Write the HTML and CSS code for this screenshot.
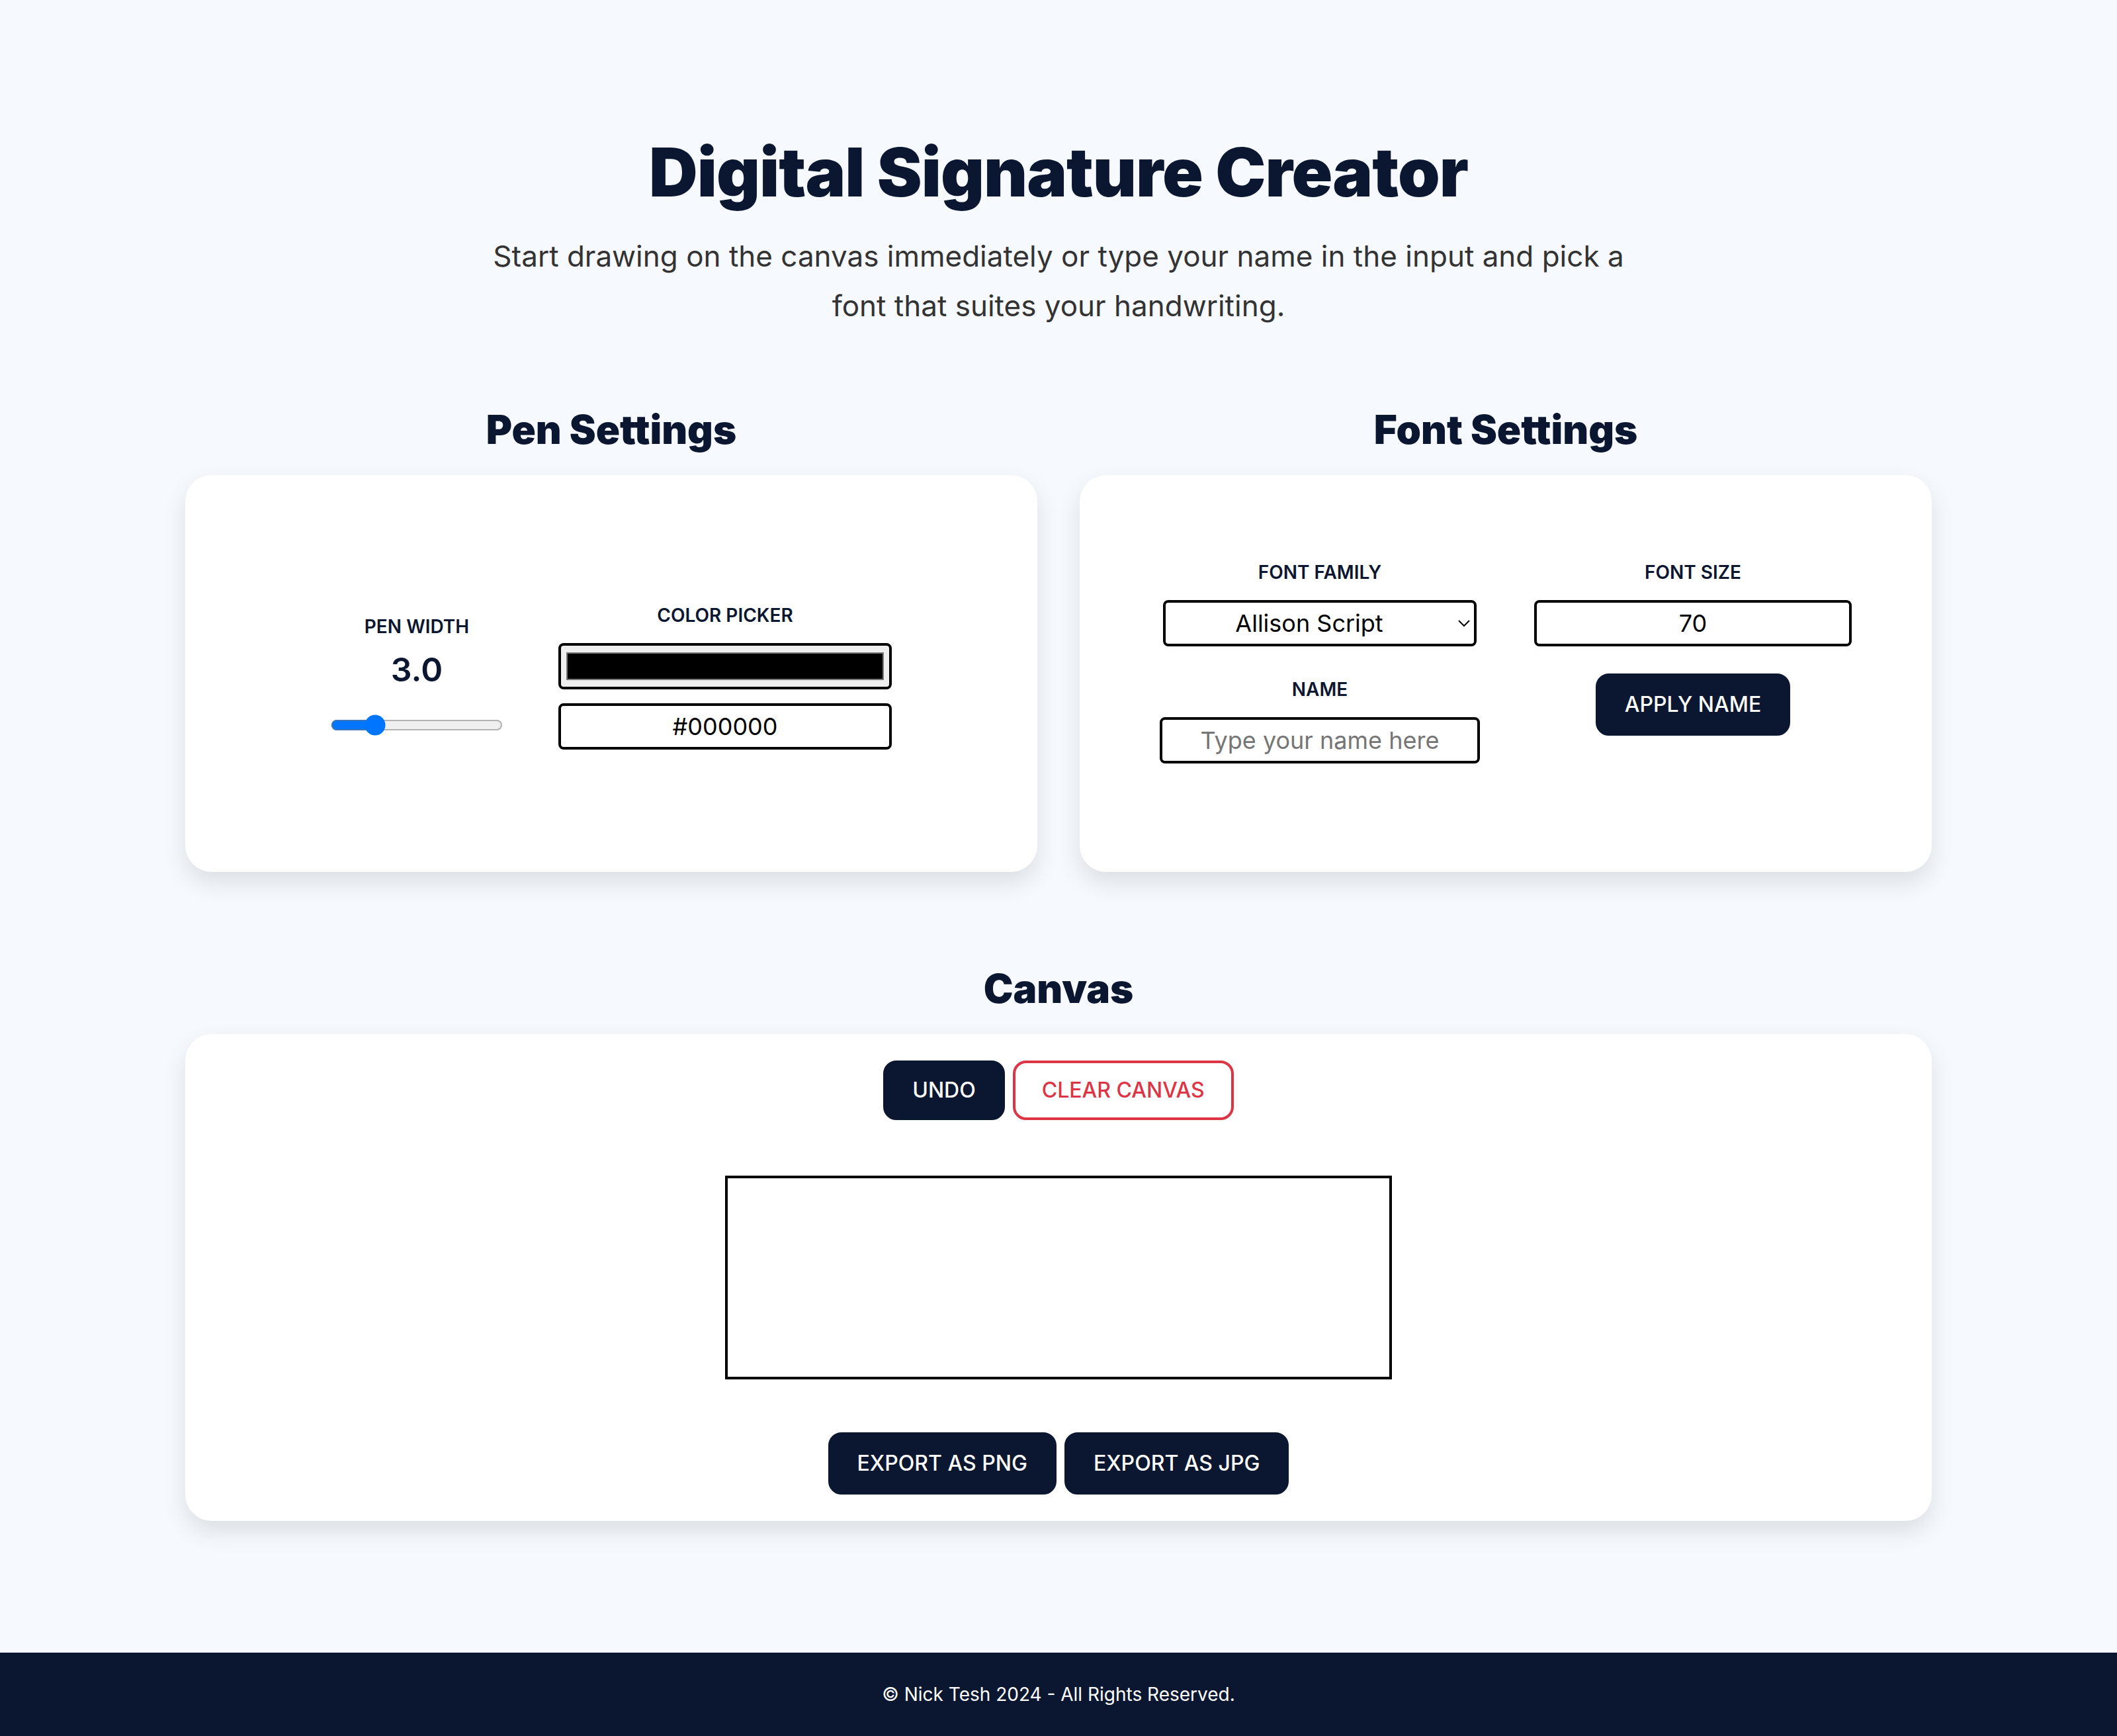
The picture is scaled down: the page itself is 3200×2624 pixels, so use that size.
FILE: index.html
```html
<!DOCTYPE html>
<html lang="en">
<head>
<meta charset="utf-8">
<title>Digital Signature Creator</title>
<link rel="stylesheet" href="styles.css">
</head>
<body>
<header class="hero">
  <h1 class="hero-title">Digital Signature Creator</h1>
  <p class="hero-text">Start drawing on the canvas immediately or type your name in the input and pick a font that suites your handwriting.</p>
</header>
<main class="main">
  <section class="settings">
    <div class="settings-col">
      <h2 class="section-title">Pen Settings</h2>
      <div class="card card-pen">
        <div class="pen-width">
          <label class="field-label" for="penWidth">Pen Width</label>
          <div class="pen-value">3.0</div>
          <input type="range" id="penWidth" class="pen-range" min="1" max="10" step="0.1" value="3">
        </div>
        <div class="color-group">
          <label class="field-label label-gap" for="penColor">Color Picker</label>
          <input type="color" id="penColor" class="color-input" value="#000000">
          <input type="text" class="text-input hex-input" value="#000000">
        </div>
      </div>
    </div>
    <div class="settings-col">
      <h2 class="section-title">Font Settings</h2>
      <div class="card card-font">
        <div class="font-grid">
          <div class="field">
            <label class="field-label label-gap" for="fontFamily">Font Family</label>
            <select id="fontFamily" class="select-input">
              <option>Allison Script</option>
              <option>Great Vibes</option>
              <option>Dancing Script</option>
            </select>
          </div>
          <div class="field">
            <label class="field-label label-gap" for="fontSize">Font Size</label>
            <input type="text" id="fontSize" class="text-input size-input" value="70">
          </div>
          <div class="field field-name">
            <label class="field-label label-gap" for="nameInput">Name</label>
            <input type="text" id="nameInput" class="text-input name-input" placeholder="Type your name here">
          </div>
          <div class="field">
            <button class="btn btn-dark btn-tall">Apply Name</button>
          </div>
        </div>
      </div>
    </div>
  </section>
  <section class="canvas-section">
    <h2 class="section-title">Canvas</h2>
    <div class="card canvas-card">
      <div class="btn-row">
        <button class="btn btn-dark">Undo</button>
        <button class="btn btn-danger">Clear Canvas</button>
      </div>
      <canvas class="sig-canvas" width="500" height="150"></canvas>
      <div class="btn-row">
        <button class="btn btn-dark btn-tall">Export as PNG</button>
        <button class="btn btn-dark btn-tall">Export as JPG</button>
      </div>
    </div>
  </section>
</main>
<footer class="footer">© Nick Tesh 2024 - All Rights Reserved.</footer>
</body>
</html>
```
FILE: styles.css
```css
html {
  zoom: 2;
}
* {
  box-sizing: border-box;
}
body {
  margin: 0;
  background: #f6f9fe;
  font-family: Inter, "Noto Sans", sans-serif;
  color: #0b1731;
}
.hero {
  text-align: center;
  padding-top: 100px;
}
.hero-title {
  margin: 0;
  font-size: 51px;
  line-height: 60px;
  font-weight: 900;
  letter-spacing: -0.5px;
}
.hero-text {
  margin: 15px auto 0;
  max-width: 880px;
  font-size: 22px;
  line-height: 37.5px;
  color: #333;
}
.main {
  max-width: 1320px;
  margin: 0 auto;
  padding: 56.5px 0 99.5px;
}
.settings {
  display: grid;
  grid-template-columns: 1fr 1fr;
  gap: 32px;
}
.section-title {
  margin: 0 0 16.5px;
  text-align: center;
  font-size: 30px;
  line-height: 36px;
  font-weight: 900;
}
.card {
  background: #fff;
  border-radius: 20px;
  box-shadow: 0 8px 18px rgba(0, 0, 0, 0.11);
}
.card-pen,
.card-font {
  height: 300px;
  display: flex;
  align-items: center;
  justify-content: center;
}
.card-pen {
  gap: 42px;
  padding-top: 5px;
}
.field-label {
  display: block;
  font-size: 14px;
  line-height: 17px;
  font-weight: 600;
  text-transform: uppercase;
  text-align: center;
}
.label-gap {
  margin-bottom: 12.5px;
}
.pen-width {
  display: flex;
  flex-direction: column;
  align-items: center;
  width: 130px;
}
.pen-value {
  margin-top: 9px;
  font-size: 25px;
  line-height: 30px;
  font-weight: 600;
}
.pen-range {
  width: 130px;
  margin: 19px 0 2px;
}
.color-group {
  display: flex;
  flex-direction: column;
  align-items: center;
}
.color-input {
  width: 252px;
  height: 35px;
  border: 2px solid #000;
  border-radius: 4px;
  margin: 0;
}
.text-input,
.select-input {
  height: 35px;
  border: 2px solid #000;
  border-radius: 4px;
  background: #fff;
  font-family: inherit;
  font-size: 18px;
  color: #000;
  text-align: center;
  margin: 0;
}
.hex-input {
  width: 252px;
  margin-top: 10.5px;
}
.font-grid {
  display: grid;
  grid-template-columns: 242px 240px;
  column-gap: 41px;
  row-gap: 20.5px;
  margin-bottom: 17px;
}
.field {
  display: flex;
  flex-direction: column;
  align-items: center;
}
.field-name {
  padding-top: 3.5px;
}
.select-input {
  width: 237px;
  text-align-last: center;
  padding: 0 6px 0 2px;
}
.size-input {
  width: 240px;
}
.name-input {
  width: 242px;
}
.name-input::placeholder {
  color: #757575;
}
.canvas-section {
  margin-top: 70px;
}
.canvas-card {
  padding: 20px;
  display: flex;
  flex-direction: column;
  align-items: center;
}
.btn-row {
  display: flex;
  justify-content: center;
  gap: 6px;
}
.btn {
  font-family: inherit;
  font-size: 16px;
  line-height: 19px;
  font-weight: 500;
  text-transform: uppercase;
  padding: 11px 20px;
  border: 2px solid #0b1731;
  border-radius: 10px;
  cursor: pointer;
}
.btn-tall {
  padding: 12px 20px;
}
.btn-dark {
  background: #0b1731;
  color: #fff;
}
.btn-danger {
  background: #fff;
  color: #dc3545;
  border-color: #dc3545;
}
.sig-canvas {
  display: block;
  margin: 42px 0 40px;
  border: 2px solid #000;
  background: #fff;
}
.footer {
  height: 63px;
  display: flex;
  align-items: center;
  justify-content: center;
  background: #0b1731;
  color: #fff;
  font-size: 14px;
}
```
